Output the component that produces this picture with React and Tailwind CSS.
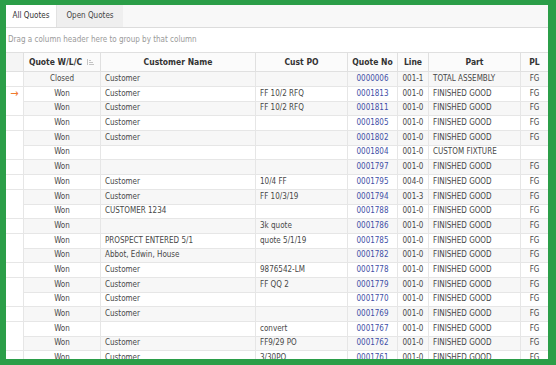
const rows = [
    ['Closed', 'Customer', '', '0000006', '001-1', 'TOTAL ASSEMBLY', 'FG'],
    ['Won', 'Customer', 'FF 10/2 RFQ', '0001813', '001-0', 'FINISHED GOOD', 'FG'],
    ['Won', 'Customer', 'FF 10/2 RFQ', '0001811', '001-0', 'FINISHED GOOD', 'FG'],
    ['Won', 'Customer', '', '0001805', '001-0', 'FINISHED GOOD', 'FG'],
    ['Won', 'Customer', '', '0001802', '001-0', 'FINISHED GOOD', 'FG'],
    ['Won', '', '', '0001804', '001-0', 'CUSTOM FIXTURE', ''],
    ['Won', '', '', '0001797', '001-0', 'FINISHED GOOD', 'FG'],
    ['Won', 'Customer', '10/4 FF', '0001795', '004-0', 'FINISHED GOOD', 'FG'],
    ['Won', 'Customer', 'FF 10/3/19', '0001794', '001-3', 'FINISHED GOOD', 'FG'],
    ['Won', 'CUSTOMER 1234', '', '0001788', '001-0', 'FINISHED GOOD', 'FG'],
    ['Won', '', '3k quote', '0001786', '001-0', 'FINISHED GOOD', 'FG'],
    ['Won', 'PROSPECT ENTERED 5/1', 'quote 5/1/19', '0001785', '001-0', 'FINISHED GOOD', 'FG'],
    ['Won', 'Abbot, Edwin, House', '', '0001782', '001-0', 'FINISHED GOOD', 'FG'],
    ['Won', 'Customer', '9876542-LM', '0001778', '001-0', 'FINISHED GOOD', 'FG'],
    ['Won', 'Customer', 'FF QQ 2', '0001779', '001-0', 'FINISHED GOOD', 'FG'],
    ['Won', 'Customer', '', '0001770', '001-0', 'FINISHED GOOD', 'FG'],
    ['Won', 'Customer', '', '0001769', '001-0', 'FINISHED GOOD', 'FG'],
    ['Won', '', 'convert', '0001767', '001-0', 'FINISHED GOOD', 'FG'],
    ['Won', 'Customer', 'FF9/29 PO', '0001762', '001-0', 'FINISHED GOOD', 'FG'],
    ['Won', 'Customer', '3/30PO', '0001761', '001-0', 'FINISHED GOOD', 'FG'],
];

const cols = 'grid grid-cols-[18px_77px_155px_92px_50px_31px_92px_1fr]';
const cell = 'border-r border-b border-[#e6e6e6] truncate px-[4px] leading-[14px]';
const head = 'border-r border-b border-[#e0e0e0] flex items-center justify-center';

function SortGlyph() {
    return (
        <svg width="9" height="8" viewBox="0 0 9 8" className="ml-[4px] inline-block">
            <path d="M1 7 L1 1 L2 1 L2 7 Z M3 7 L8 7 L8 6 L3 6 Z M3 5 L7 5 L7 4 L3 4 Z M3 3 L5 3 L5 2 L3 2 Z" fill="#c4c4c4" />
        </svg>
    );
}

export default function App() {
    return (
        <div className="w-[556px] h-[365px] bg-[#2b9e48] pt-[5px] pl-[6px] pr-[8px] pb-[6px] overflow-hidden">
            <div className="w-full h-full bg-white flex flex-col overflow-hidden text-[8px] text-[#474747]" style={{ fontFamily: '"DejaVu Sans Condensed", "DejaVu Sans", sans-serif' }}>
                <div className="h-[23px] flex items-stretch bg-[#f8f8f8] border-b border-[#dcdcdc] shrink-0">
                    <div className="w-[51px] flex items-center justify-center bg-white border-r border-[#e2e2e2] text-[#333]">All Quotes</div>
                    <div className="w-[66px] flex items-center justify-center bg-[#efefef] text-[#444]">Open Quotes</div>
                </div>
                <div className="h-[24px] flex items-center px-[2px] text-[#9a9a9a] shrink-0">
                    Drag a column header here to group by that column
                </div>
                <div className={`${cols} h-[20px] border-t border-[#e0e0e0] shrink-0 bg-[#fbfbfb] font-bold text-[8.5px] text-[#333]`}>
                    <div className="border-r border-b border-[#e0e0e0] bg-[#f5f5f5]" />
                    <div className={head}>Quote W/L/C<SortGlyph /></div>
                    <div className={head}>Customer Name</div>
                    <div className={head}>Cust PO</div>
                    <div className={head}>Quote No</div>
                    <div className={head}>Line</div>
                    <div className={head}>Part</div>
                    <div className="border-b border-[#e0e0e0] flex items-center justify-center">PL</div>
                </div>
                <div className="flex-1 overflow-hidden">
                    {rows.map((r, i) => (
                        <div key={i} className={`${cols} h-[14.7px] ${i % 2 === 0 ? 'bg-[#f7f7f7]' : 'bg-white'}`}>
                            <div className="border-r border-b border-[#e6e6e6] bg-white flex items-center justify-center text-[#f07a2e] text-[11px] leading-none">
                                {i === 1 ? '→' : ''}
                            </div>
                            <div className={`${cell} text-center`}>{r[0]}</div>
                            <div className={cell}>{r[1]}</div>
                            <div className={cell}>{r[2]}</div>
                            <div className={`${cell} text-center text-[#3f4fa6]`}>{r[3]}</div>
                            <div className={`${cell} text-center`}>{r[4]}</div>
                            <div className={cell}>{r[5]}</div>
                            <div className="border-b border-[#e6e6e6] text-center leading-[14px]">{r[6]}</div>
                        </div>
                    ))}
                </div>
            </div>
        </div>
    );
}
